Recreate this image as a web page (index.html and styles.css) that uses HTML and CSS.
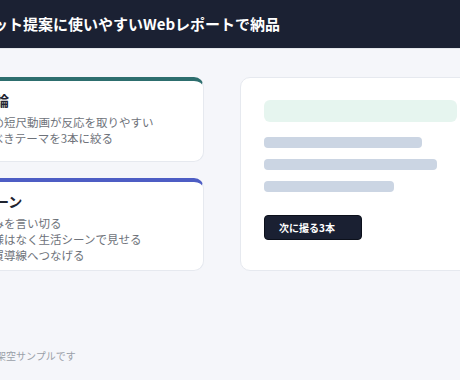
FILE: index.html
```html
<!DOCTYPE html>
<html lang="ja">
<head>
<meta charset="utf-8">
<title>レポート</title>
<link rel="stylesheet" href="styles.css">
</head>
<body>
<div class="page">
  <header class="topbar">
    <h1 class="topbar-title">本セット提案に使いやすいWebレポートで納品</h1>
  </header>
  <main class="grid">
    <div class="col">
      <section class="card card-teal">
        <h2 class="card-title">結論</h2>
        <p class="card-line">ため短尺動画が反応を取りやすい</p>
        <p class="card-line">すべきテーマを3本に絞る</p>
      </section>
      <section class="card card-blue">
        <h2 class="card-title">シーン</h2>
        <p class="card-line">強みを言い切る</p>
        <p class="card-line">仕様はなく生活シーンで見せる</p>
        <p class="card-line">購買導線へつなげる</p>
      </section>
    </div>
    <section class="preview">
      <div class="preview-hero"></div>
      <div class="preview-bars">
        <div class="bar bar-a"></div>
        <div class="bar bar-b"></div>
        <div class="bar bar-c"></div>
      </div>
      <button class="preview-btn" type="button">次に撮る3本</button>
    </section>
  </main>
  <footer class="note">数値は架空サンプルです</footer>
</div>
</body>
</html>
```
FILE: styles.css
```css
html, body {
  margin: 0;
  padding: 0;
  overflow: hidden;
  background: #f5f6fa;
  font-family: "Noto Sans CJK JP", "Noto Sans", sans-serif;
}

.page {
  width: 566px;
  margin-left: -61px;
}

.topbar {
  height: 48px;
  background: #1b2133;
  border-bottom: 1px solid #e3e6ec;
  padding: 0 24px;
  display: flex;
  align-items: center;
}

.topbar-title {
  margin: 0;
  color: #ffffff;
  font-size: 15px;
  font-weight: 700;
  line-height: 20px;
  white-space: nowrap;
}

.grid {
  display: grid;
  grid-template-columns: 1fr 1fr;
  column-gap: 36px;
  padding: 28px 24px 0;
}

.col {
  display: flex;
  flex-direction: column;
  gap: 16px;
}

.card {
  background: #ffffff;
  border: 1px solid #e6e9ef;
  border-top-width: 4px;
  border-radius: 10px;
  padding: 9px 17px 12px;
}

.card-teal {
  border-top-color: #2d6e6e;
  padding-bottom: 15px;
}

.card-blue {
  border-top-color: #4d5dc4;
  padding-bottom: 7px;
}

.card-title {
  margin: 0 0 4px;
  font-size: 14px;
  line-height: 20px;
  font-weight: 700;
  color: #1f2430;
  white-space: nowrap;
}

.card-line {
  margin: 0;
  font-size: 11.5px;
  line-height: 16px;
  color: #6e727a;
  white-space: nowrap;
}

.preview {
  background: #ffffff;
  border: 1px solid #e6e9ef;
  border-radius: 10px;
  padding: 22px 23px;
  display: flex;
  flex-direction: column;
  align-items: flex-start;
}

.preview-hero {
  align-self: stretch;
  height: 22px;
  border-radius: 6px;
  background: #e6f5ef;
}

.preview-bars {
  display: flex;
  flex-direction: column;
  gap: 11px;
  margin-top: 15px;
  align-self: stretch;
}

.bar {
  height: 11px;
  border-radius: 4px;
  background: #cbd5e3;
}

.bar-a { width: 158px; }
.bar-b { width: 173px; }
.bar-c { width: 130px; }

.preview-btn {
  margin-top: 23px;
  width: 98px;
  height: 25px;
  padding: 0 0 0 14px;
  text-align: left;
  background: #1a2032;
  border: 1px solid #0c101b;
  border-radius: 4px;
  color: #ffffff;
  font-family: "Noto Sans CJK JP", sans-serif;
  font-size: 10px;
  font-weight: 700;
}

.note {
  margin-top: 78px;
  padding-left: 27px;
  font-size: 10px;
  line-height: 14px;
  color: #9aa0a9;
  white-space: nowrap;
}
```
